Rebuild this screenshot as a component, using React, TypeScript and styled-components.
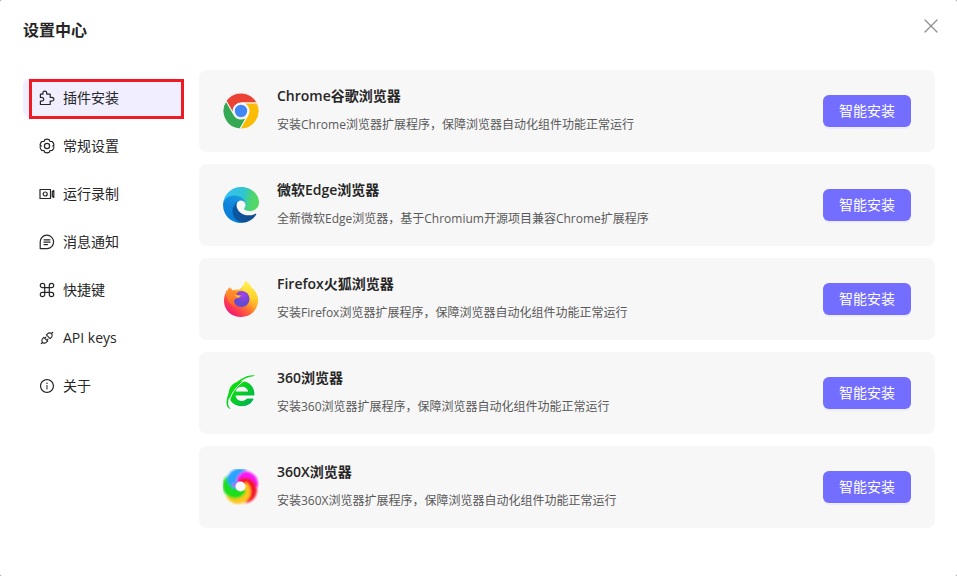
import React, { useState } from "react";
import styled, { createGlobalStyle } from "styled-components";
import { AiOutlineApi, AiOutlineInfoCircle } from "react-icons/ai";

const GlobalStyle = createGlobalStyle`
  * { box-sizing: border-box; }
  body {
    margin: 0;
    background: #8c8c8c;
    color: #262626;
    font-family: "Open Sans", "Noto Sans CJK SC", sans-serif;
    font-size: 14px;
  }
  button { font-family: inherit; }
`;

const Dialog = styled.main`
  min-height: 100vh;
  padding: 16px 22px 24px 23px;
  background: #fff;
  border-radius: 2px;
`;

const Header = styled.header`
  display: flex;
  align-items: flex-start;
  justify-content: space-between;
  height: 54px;
`;

const Title = styled.h1`
  margin: 0;
  font-size: 16px;
  font-weight: 700;
  line-height: 28px;
`;

const CloseButton = styled.button`
  display: flex;
  align-items: center;
  justify-content: center;
  width: 20px;
  height: 20px;
  margin-right: -6px;
  padding: 0;
  border: 0;
  background: none;
  color: #8c8c8c;
  cursor: pointer;
`;

const Body = styled.div`
  display: grid;
  grid-template-columns: 160px 1fr;
  gap: 16px;
`;

const Nav = styled.nav`
  display: flex;
  flex-direction: column;
  gap: 8px;
  padding-top: 8px;
`;

const NavItem = styled.button<{ $active: boolean }>`
  position: relative;
  display: flex;
  align-items: center;
  gap: 8px;
  height: 40px;
  padding: 0 16px;
  border: 0;
  border-radius: 8px;
  background: ${(p) => (p.$active ? "#f0eeff" : "transparent")};
  color: #262626;
  font-size: 14px;
  line-height: 22px;
  text-align: left;
  cursor: pointer;
`;

const Marker = styled.span`
  position: absolute;
  inset: 1px -1px -1px 6px;
  border: 3px solid #ed1c24;
  pointer-events: none;
`;

const List = styled.ul`
  display: flex;
  flex-direction: column;
  gap: 12px;
  margin: 0;
  padding: 0;
  list-style: none;
`;

const Card = styled.li`
  display: flex;
  align-items: center;
  gap: 18px;
  min-height: 82px;
  padding: 12px 24px;
  border-radius: 8px;
  background: #f7f7f7;
`;

const CardText = styled.div`
  flex: 1;
  min-width: 0;
`;

const CardTitle = styled.h2`
  margin: 0 0 8px;
  font-size: 14px;
  font-weight: 600;
  line-height: 20px;
`;

const CardDesc = styled.p`
  margin: 0;
  color: #595959;
  font-size: 12px;
  line-height: 22px;
`;

const InstallButton = styled.button`
  height: 32px;
  padding: 0 16px;
  border: 0;
  border-radius: 6px;
  background: #736eff;
  box-shadow: 0 2px 0 #eeecfa;
  color: #fff;
  font-size: 14px;
  line-height: 22px;
  cursor: pointer;
`;

const line = {
  width: 16,
  height: 16,
  viewBox: "0 0 16 16",
  fill: "none",
  stroke: "currentColor",
  strokeWidth: 1.2,
  strokeLinejoin: "round" as const,
  strokeLinecap: "round" as const,
  "aria-hidden": true,
};

const PuzzleIcon = () => (
  <svg {...line}>
    <path d="M1.400 4.200h2.500c-.3-2 .5-3.100 1.900-3.100s2.300 1.100 1.900 3.100h3.500v3.200c2.200-.4 3.700.3 3.700 1.800s-1.500 2.200-3.700 1.800v3.500H1.400v-3.400c2.200.2 3.300-.5 3.300-1.900s-1.100-2-3.300-1.800V4.200Z" />
  </svg>
);

const GearIcon = () => (
  <svg {...line}>
    <path d="M5.900 1.600Q8 .8 10.100 1.600L11 3.400 13.200 3.500Q14.700 5 15 7L13.800 8 15 9Q14.700 11 13.200 12.500L11 12.600 10.100 14.400Q8 15.200 5.900 14.400L5 12.600 2.800 12.500Q1.300 11 1 9L2.200 8 1 7Q1.300 5 2.800 3.500L5 3.400Z" />
    <circle cx="8" cy="8" r="2.600" />
  </svg>
);

const CameraIcon = () => (
  <svg {...line}>
    <path d="M1 3.500h10.500v9H1z" />
    <circle cx="6.200" cy="8" r="2" />
    <path d="M13.300 5.400 14.800 4.500v7l-1.500-.9z" />
  </svg>
);

const MessageIcon = () => (
  <svg {...line}>
    <path d="M1.200 14.600V8A6.700 6.700 0 1 1 8 14.600H1.200Z" />
    <path d="M5 5.800h6M5 8.200h6M5 10.600h3.500" />
  </svg>
);

const CommandIcon = () => (
  <svg {...line}>
    <path d="M5.700 5.700V3.500a2.200 2.200 0 1 0-2.200 2.200h9a2.200 2.200 0 1 0-2.200-2.200v9a2.200 2.200 0 1 0 2.200-2.200h-9a2.200 2.200 0 1 0 2.200 2.200V5.700Z" />
  </svg>
);

const CloseIcon = () => (
  <svg {...line} width={14} height={14} viewBox="0 0 14 14">
    <path d="m1 1 12 12M13 1 1 13" />
  </svg>
);

const logo = { width: 36, height: 36, viewBox: "0 0 36 36", "aria-hidden": true };

const CHROME_BLADE = "M16.100-8A18 18 0 0 0-15-10L-6.900 4A8 8 0 0 1 0-8Z";

const ChromeLogo = () => (
  <svg {...logo}>
    <g transform="translate(18 18)">
      <g stroke="#f7f7f7" strokeWidth="1">
        <path d={CHROME_BLADE} fill="#ea4335" />
        <path d={CHROME_BLADE} fill="#fbbc05" transform="rotate(120)" />
        <path d={CHROME_BLADE} fill="#34a853" transform="rotate(240)" />
      </g>
      <circle r="8" fill="#f7f7f7" />
      <circle r="6.200" fill="#4285f4" />
    </g>
  </svg>
);

const EdgeLogo = () => (
  <svg {...logo} viewBox="0 0 256 256">
    <defs>
      <linearGradient id="edgeDeep" x1="60" y1="177" x2="241" y2="177" gradientUnits="userSpaceOnUse">
        <stop offset="0" stopColor="#0c59a4" />
        <stop offset="1" stopColor="#114a8b" />
      </linearGradient>
      <linearGradient id="edgeBlue" x1="120" y1="60" x2="60" y2="240" gradientUnits="userSpaceOnUse">
        <stop offset="0" stopColor="#1b9de2" />
        <stop offset=".5" stopColor="#0f83dc" />
        <stop offset="1" stopColor="#0680d7" />
      </linearGradient>
      <linearGradient id="edgeTop" x1="30" y1="60" x2="240" y2="110" gradientUnits="userSpaceOnUse">
        <stop offset="0" stopColor="#35c1f1" />
        <stop offset=".55" stopColor="#2fc5d0" />
        <stop offset=".8" stopColor="#4bd477" />
        <stop offset="1" stopColor="#51d963" />
      </linearGradient>
    </defs>
    <g transform="translate(-4.600 -4.900)">
      <path fill="url(#edgeDeep)" d="M235.700 195.500a93.700 93.700 0 0 1-10.600 4.700 101.900 101.900 0 0 1-35.900 6.400c-47.300 0-88.500-32.500-88.500-74.300a31.500 31.500 0 0 1 16.400-27.300c-42.800 1.800-53.800 46.400-53.800 72.500 0 73.900 68.100 81.400 82.800 81.400 7.900 0 19.800-2.300 27-4.600l1.300-.4a128.300 128.300 0 0 0 66.600-52.800 4 4 0 0 0-5.300-5.600Z" />
      <path fill="url(#edgeBlue)" d="M110.300 246.300A79.200 79.200 0 0 1 87.600 225a80.700 80.700 0 0 1 29.500-120c3.100-1.500 8.500-4.100 15.600-4a32.400 32.400 0 0 1 25.700 13 31.900 31.900 0 0 1 6.300 18.700c0-.2 24.500-79.600-80-79.600-43.900 0-80 41.600-80 78.200a130.200 130.200 0 0 0 12.100 56 128 128 0 0 0 156.400 67.100 75.600 75.600 0 0 1-62.800-8Z" />
      <path fill="url(#edgeTop)" d="M156.900 153.800c-.8 1-3.300 2.500-3.300 5.600 0 2.700 1.700 5.200 4.800 7.300 14.300 10 41.400 8.600 41.500 8.600a59.600 59.600 0 0 0 30.300-8.300 61.400 61.400 0 0 0 30.400-52.900c.3-22.400-8-37.300-11.300-43.900C228.100 28.800 182.400 4.900 132.600 4.900a128 128 0 0 0-128 126.200c.5-36.500 36.800-66 80-66 3.500 0 23.500.3 42 10 16.300 8.600 24.900 19 30.800 29.300 6.200 10.600 7.300 24.100 7.300 29.500s-2.700 13.300-7.800 19.900Z" />
    </g>
  </svg>
);

const FirefoxLogo = () => (
  <svg {...logo}>
    <defs>
      <linearGradient id="foxBody" x1="29" y1="5" x2="6" y2="32" gradientUnits="userSpaceOnUse">
        <stop offset="0" stopColor="#fff04c" />
        <stop offset=".3" stopColor="#ffc52e" />
        <stop offset=".55" stopColor="#ff7a2f" />
        <stop offset=".8" stopColor="#ff3b50" />
        <stop offset="1" stopColor="#f0197c" />
      </linearGradient>
      <linearGradient id="foxFlame" x1="26" y1="0" x2="29" y2="30" gradientUnits="userSpaceOnUse">
        <stop offset="0" stopColor="#fff24f" />
        <stop offset=".6" stopColor="#ffcf2b" />
        <stop offset="1" stopColor="#ff8a26" stopOpacity="0" />
      </linearGradient>
      <radialGradient id="foxGlobe" cx=".6" cy=".25" r=".8">
        <stop offset="0" stopColor="#a544ec" />
        <stop offset=".6" stopColor="#6947d4" />
        <stop offset="1" stopColor="#5950d8" />
      </radialGradient>
      <linearGradient id="foxHead" x1="5" y1="7" x2="9" y2="25" gradientUnits="userSpaceOnUse">
        <stop offset="0" stopColor="#ff9a2b" />
        <stop offset="1" stopColor="#ff632c" />
      </linearGradient>
    </defs>
    <path fill="url(#foxBody)" d="M22.200 0c3 1.800 5.100 4 6.300 6.700 3.900 2.800 6.600 8.200 6.500 13.400C34.800 29.200 27.300 36 18 36 8.400 36 1 29 1 19.900c0-3 .5-5.600 1.700-7.900l.4-2.200 1.700-.1c.1-1.400.7-2.500 1.600-3.400.6 1.500 1.700 2.600 3.300 3.200 1.900-.9 4-1 6.200-.8 2.600-1.700 5.500-4.500 6.300-8.700Z" />
    <path fill="url(#foxFlame)" d="M22.200 0c3 1.800 5.100 4 6.300 6.700 3.900 2.800 6.600 8.200 6.500 13.400-.5 5-3 8-7 10 2-6 1-10-2-14-3-3-6-4-6.500-8C19 5 22 4 22.200 0Z" />
    <circle cx="18.500" cy="18" r="8" fill="url(#foxGlobe)" />
    <path fill="url(#foxHead)" d="M3 10c1.200-.3 2.200-.1 3.200.2.300-1.500.9-2.500 2-3.200.4 1.300 1 2.400 2 3 1.700.3 3.200.5 5 .7-.9.8-1.500 1.600-1.800 2.800 1.100.9 3 .8 4.600 1-.5 1.300-1.700 1.900-2.900 2.300-2 .7-3.200 1.300-3.900 2.700C10.500 22 11.200 24 13 26 8 25 4.500 19.500 3 14Z" />
    <path fill="#ffba37" d="M10.500 13.500c2.800.8 5 .9 7.500 1-.5 1.300-1.700 1.900-2.900 2.300-1.800-.7-3.400-1.700-4.600-3.300Z" />
  </svg>
);

const Browser360Logo = () => (
  <svg {...logo}>
    <defs>
      <linearGradient id="e360" x1="5" y1="5" x2="30" y2="30" gradientUnits="userSpaceOnUse">
        <stop offset="0" stopColor="#12e600" />
        <stop offset=".5" stopColor="#08cf24" />
        <stop offset="1" stopColor="#00af57" />
      </linearGradient>
      <path id="e360Ring" d="M31.500 20.500H12.500c.5 3.600 3 5.400 6.200 5.400 2.300 0 4-.8 5.200-2.400h6.900c-2 5-6.300 7.700-11.900 7.700-7.900 0-13.200-5-13.200-12.400S10.900 6.300 18.700 6.300s13.200 5.700 12.800 14.200ZM12.700 16.500h12.400c-.6-3-2.900-4.700-6.200-4.700s-5.600 1.700-6.200 4.700Z" />
      <path id="e360Orbit" d="M32.800 1.100C30.300-.5 24.500.500 18.500 3.700 9 9 3.800 19.500 3.500 27c-.2 4.200 1.400 6.700 4.800 7.200-2.700-1.700-3.600-4.600-2.900-8.700C6.700 18 12 9.500 20.500 4.500 25.500 1.900 30.400 1.100 32.800 1.100Z" />
    </defs>
    <g fill="#fff" stroke="#fff" strokeWidth="2.500" strokeLinejoin="round">
      <use href="#e360Ring" />
      <use href="#e360Orbit" />
    </g>
    <use href="#e360Ring" fill="url(#e360)" />
    <path d="M6 28C7 20 13.500 10.500 22.500 4.800" fill="none" stroke="#fff" strokeWidth="1" />
    <use href="#e360Orbit" fill="url(#e360)" />
  </svg>
);

const SWIRL = ["#29a3ff", "#fa14f5", "#f5142b", "#ffc61a", "#1ede1e"];

const Browser360XLogo = () => (
  <svg {...logo}>
    <defs>
      <filter id="swirlSoft" x="-20%" y="-20%" width="140%" height="140%">
        <feGaussianBlur stdDeviation=".8" />
      </filter>
      <clipPath id="swirlHalf">
        <path d="M-2-18H18V0H-2Z" />
      </clipPath>
    </defs>
    <g transform="translate(17.500 17.500)">
      <g filter="url(#swirlSoft)">
        {[...SWIRL, SWIRL[0]].map((color, i) => (
          <g key={i} transform={`rotate(${i * 72 - 50})`}>
            <path
              fill={color}
              clipPath={i === SWIRL.length ? "url(#swirlHalf)" : undefined}
              d="M-6.500 3C-12-5-8-15 1-16.500 9-17.500 15-13 16.500-5 14-8 9-9 5-8 1-7 0-4 0-2Z"
            />
          </g>
        ))}
      </g>
      <circle r="5" fill="#fff" />
    </g>
  </svg>
);

const NAV = [
  { label: "插件安装", icon: <PuzzleIcon />, marked: true },
  { label: "常规设置", icon: <GearIcon /> },
  { label: "运行录制", icon: <CameraIcon /> },
  { label: "消息通知", icon: <MessageIcon /> },
  { label: "快捷键", icon: <CommandIcon /> },
  { label: "API keys", icon: <AiOutlineApi size={16} /> },
  { label: "关于", icon: <AiOutlineInfoCircle size={16} /> },
];

const BROWSERS = [
  { name: "Chrome谷歌浏览器", desc: "安装Chrome浏览器扩展程序，保障浏览器自动化组件功能正常运行", logo: <ChromeLogo /> },
  { name: "微软Edge浏览器", desc: "全新微软Edge浏览器，基于Chromium开源项目兼容Chrome扩展程序", logo: <EdgeLogo /> },
  { name: "Firefox火狐浏览器", desc: "安装Firefox浏览器扩展程序，保障浏览器自动化组件功能正常运行", logo: <FirefoxLogo /> },
  { name: "360浏览器", desc: "安装360浏览器扩展程序，保障浏览器自动化组件功能正常运行", logo: <Browser360Logo /> },
  { name: "360X浏览器", desc: "安装360X浏览器扩展程序，保障浏览器自动化组件功能正常运行", logo: <Browser360XLogo /> },
];

export default function App() {
  const [active, setActive] = useState(0);
  return (
    <>
      <GlobalStyle />
      <Dialog lang="zh-CN">
        <Header>
          <Title>设置中心</Title>
          <CloseButton type="button" aria-label="关闭">
            <CloseIcon />
          </CloseButton>
        </Header>
        <Body>
          <Nav>
            {NAV.map((item, i) => (
              <NavItem key={item.label} type="button" $active={i === active} onClick={() => setActive(i)}>
                {item.icon}
                {item.label}
                {item.marked && <Marker />}
              </NavItem>
            ))}
          </Nav>
          <List>
            {BROWSERS.map((b) => (
              <Card key={b.name}>
                {b.logo}
                <CardText>
                  <CardTitle>{b.name}</CardTitle>
                  <CardDesc>{b.desc}</CardDesc>
                </CardText>
                <InstallButton type="button">智能安装</InstallButton>
              </Card>
            ))}
          </List>
        </Body>
      </Dialog>
    </>
  );
}
